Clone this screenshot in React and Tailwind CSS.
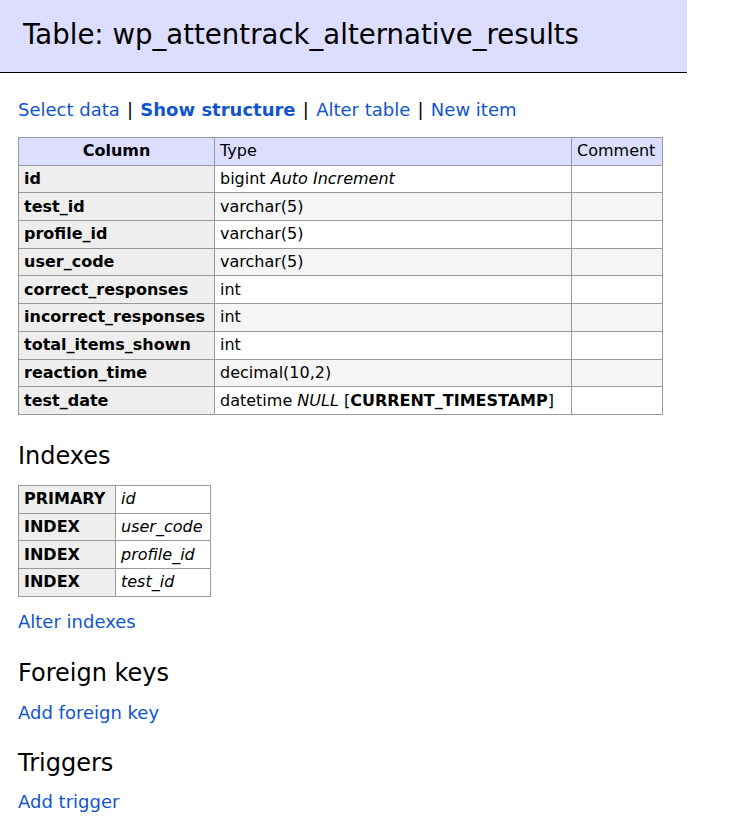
import React from "react";

const cols = [
  ["id", <>bigint <i>Auto Increment</i></>],
  ["test_id", "varchar(5)"],
  ["profile_id", "varchar(5)"],
  ["user_code", "varchar(5)"],
  ["correct_responses", "int"],
  ["incorrect_responses", "int"],
  ["total_items_shown", "int"],
  ["reaction_time", "decimal(10,2)"],
  ["test_date", <>datetime <i>NULL</i> [<b>CURRENT_TIMESTAMP</b>]</>],
];

const idx = [
  ["PRIMARY", "id"],
  ["INDEX", "user_code"],
  ["INDEX", "profile_id"],
  ["INDEX", "test_id"],
];

const cell = "border border-[#999] px-[5px] py-0 h-[27.7px] leading-[18px] align-middle";

function Sep() {
  return <span className="text-black mx-[1.5px]">|</span>;
}

export default function App() {
  return (
    <div className="font-['DejaVu_Sans',Verdana,sans-serif] text-black bg-white min-h-[836px] text-[16px]">
      <div className="w-[687px] h-[73px] bg-[#ddf] border-b border-black flex items-center pl-[23px]">
        <h2 className="text-[27.6px] font-normal leading-[32px] -mt-[2px] whitespace-nowrap">Table: wp_attentrack_alternative_results</h2>
      </div>
      <div className="pl-[18px]">
        <p className="mt-[27px] leading-[20px] text-[18px] text-[#1155cc] whitespace-nowrap">
          <a>Select data</a> <Sep /> <a className="font-bold">Show structure</a> <Sep /> <a>Alter table</a> <Sep />{" "}
          <a>New item</a>
        </p>
        <table className="mt-[17px] border-collapse table-fixed w-[644px]">
          <colgroup>
            <col className="w-[196px]" />
            <col className="w-[357px]" />
            <col className="w-[91px]" />
          </colgroup>
          <thead>
            <tr className="bg-[#ddf]">
              <th className={cell + " text-center font-bold"}>Column</th>
              <td className={cell + " text-left"}>Type</td>
              <td className={cell + " text-left"}>Comment</td>
            </tr>
          </thead>
          <tbody>
            {cols.map(([n, t], i) => (
              <tr key={n} className={i % 2 === 1 ? "bg-[#f5f5f5]" : "bg-white"}>
                <th className={cell + " text-left font-bold bg-[#eee] whitespace-nowrap"}>{n}</th>
                <td className={cell + " text-left whitespace-nowrap"}>{t}</td>
                <td className={cell}></td>
              </tr>
            ))}
          </tbody>
        </table>
        <h3 className="mt-[27px] text-[24px] leading-[28px] font-normal">Indexes</h3>
        <table className="mt-[15px] border-collapse table-fixed w-[192px]">
          <colgroup>
            <col className="w-[97px]" />
            <col className="w-[95px]" />
          </colgroup>
          <tbody>
            {idx.map(([k, c], i) => (
              <tr key={i}>
                <th className={cell + " text-left font-bold bg-[#eee]"}>{k}</th>
                <td className={cell + " text-left italic whitespace-nowrap"}>{c}</td>
              </tr>
            ))}
          </tbody>
        </table>
        <p className="mt-[15px] leading-[20px] text-[18px] text-[#1155cc]"><a>Alter indexes</a></p>
        <h3 className="mt-[27px] text-[24px] leading-[28px] font-normal">Foreign keys</h3>
        <p className="mt-[16px] leading-[20px] text-[18px] text-[#1155cc]"><a>Add foreign key</a></p>
        <h3 className="mt-[26px] text-[24px] leading-[28px] font-normal">Triggers</h3>
        <p className="mt-[15px] leading-[20px] text-[18px] text-[#1155cc]"><a>Add trigger</a></p>
      </div>
    </div>
  );
}
